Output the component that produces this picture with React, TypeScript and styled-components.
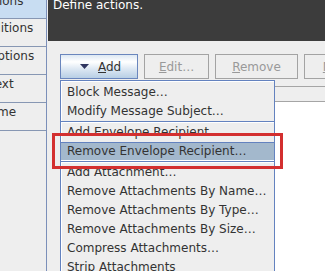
import React from "react";
import styled, { createGlobalStyle } from "styled-components";

const GlobalStyle = createGlobalStyle`
  html, body {
    margin: 0;
    padding: 0;
    background: #eeeeee;
  }
  body {
    width: 325px;
    height: 271px;
    overflow: hidden;
    font-family: "DejaVu Sans", "Liberation Sans", sans-serif;
    font-size: 12px;
    color: #333333;
  }
  #root {
    width: 325px;
    height: 271px;
  }
`;

const Screen = styled.div`
  position: relative;
  display: flex;
  width: 325px;
  height: 271px;
  overflow: hidden;
  background: #eeeeee;
`;

const TabColumn = styled.div`
  flex: 0 0 89px;
  margin-left: -43px;
  margin-top: -9px;
  display: flex;
  flex-direction: column;
`;

const Tab = styled.div<{ $selected?: boolean; $last?: boolean }>`
  box-sizing: border-box;
  height: ${(p) => (p.$selected ? 27 : p.$last ? 29 : 28)}px;
  padding-top: 2px;
  line-height: 14px;
  text-align: center;
  white-space: nowrap;
  color: #333333;
  background: ${(p) => (p.$selected ? "#c8ddf2" : "#eeeeee")};
  border-top: 1px solid ${(p) => (p.$selected ? "#c8ddf2" : "#8797b3")};
  border-bottom: ${(p) => (p.$last ? "1px solid #8797b3" : "none")};
`;

const Content = styled.div`
  flex: 1;
  min-width: 0;
  display: flex;
  flex-direction: column;
  border-left: 1px solid #7b8fb9;
  padding-left: 1px;
`;

const Header = styled.div`
  flex: 0 0 41px;
  background: #3c3c3c;
  color: #ffffff;
  padding-left: 5px;
  overflow: hidden;
`;

const Title = styled.div`
  margin-top: -2px;
  line-height: 14px;
  white-space: nowrap;
`;

const Body = styled.div`
  flex: 1;
  display: flex;
  flex-direction: column;
  padding: 13px 0 0 12px;
`;

const ButtonRow = styled.div`
  display: flex;
  gap: 6px;
  height: 25px;
`;

const Button = styled.div<{ $w: number; $disabled?: boolean; $start?: boolean }>`
  box-sizing: border-box;
  flex: 0 0 ${(p) => p.$w}px;
  height: 25px;
  display: flex;
  align-items: center;
  justify-content: ${(p) => (p.$start ? "flex-start" : "center")};
  padding-left: ${(p) => (p.$start ? "19px" : "0")};
  white-space: nowrap;
  line-height: 14px;
  color: ${(p) => (p.$disabled ? "#999999" : "#333333")};
  border: 1px solid ${(p) => (p.$disabled ? "#a3a3a3" : "#6a86bd")};
  background: ${(p) =>
    p.$disabled
      ? "#eeeeee"
      : "linear-gradient(#dde8f3 0%, #ffffff 30%, #dde8f3 60%, #b8cfe5 100%)"};
`;

const Mn = styled.span`
  text-decoration: underline;
  text-underline-offset: 1px;
`;

const Arrow = styled.svg`
  display: block;
  margin-right: 9px;
`;

const AddWrap = styled.div`
  position: relative;
  display: flex;
`;

const Menu = styled.div`
  position: absolute;
  top: 26px;
  left: 0;
  z-index: 2;
  box-sizing: border-box;
  width: 215px;
  padding: 2px 0 1px 0;
  border: 1px solid #6382bf;
  background: #eeeeee;
  box-shadow: inset 1px 1px 0 #ffffff;
`;

const Item = styled.div<{ $armed?: boolean }>`
  box-sizing: border-box;
  height: 19px;
  line-height: ${(p) => (p.$armed ? 17 : 19)}px;
  padding-left: ${(p) => (p.$armed ? 6 : 5)}px;
  white-space: nowrap;
  color: #333333;
  background: ${(p) => (p.$armed ? "#a3b8cc" : "transparent")};
  border-left: ${(p) => (p.$armed ? "none" : "1px solid #ffffff")};
  border-top: ${(p) => (p.$armed ? "1px solid #6382bf" : "none")};
  border-bottom: ${(p) => (p.$armed ? "1px solid #ffffff" : "none")};
`;

const Separator = styled.div`
  height: 1px;
  background: #6382bf;
  border-bottom: 1px solid #ffffff;
`;

const Table = styled.div`
  flex: 1;
  display: flex;
  flex-direction: column;
  margin-top: 7px;
  margin-right: -20px;
`;

const TableHead = styled.div`
  flex: 0 0 14px;
  background: #eeeeee;
  border-top: 1px solid #a5a5a5;
  border-bottom: 1px solid #a5a5a5;
`;

const TableBody = styled.div`
  flex: 1;
  background: #ffffff;
`;

const Callout = styled.div`
  position: absolute;
  left: 52px;
  top: 133px;
  width: 231px;
  height: 36px;
  box-sizing: border-box;
  border: 3px solid #d32f2f;
  z-index: 3;
  pointer-events: none;
`;

type MenuEntry = { label?: string; sep?: boolean; armed?: boolean };

const menuEntries: MenuEntry[] = [
  { label: "Block Message…" },
  { label: "Modify Message Subject…" },
  { sep: true },
  { label: "Add Envelope Recipient…" },
  { label: "Remove Envelope Recipient…", armed: true },
  { sep: true },
  { label: "Add Attachment…" },
  { label: "Remove Attachments By Name…" },
  { label: "Remove Attachments By Type…" },
  { label: "Remove Attachments By Size…" },
  { label: "Compress Attachments…" },
  { label: "Strip Attachments" },
];

const tabs = ["Actions", "Conditions", "Exceptions", "Text", "Time"];

export default function App() {
  return (
    <>
      <GlobalStyle />
      <Screen>
        <TabColumn>
          {tabs.map((t, i) => (
            <Tab key={t} $selected={i === 0} $last={i === tabs.length - 1}>
              {t}
            </Tab>
          ))}
        </TabColumn>
        <Content>
          <Header>
            <Title>Define actions.</Title>
          </Header>
          <Body>
            <ButtonRow>
              <AddWrap>
                <Button $w={78} $start>
                  <Arrow width="9" height="5" viewBox="0 0 9 5">
                    <polygon points="0,0 9,0 4.5,5" fill="#2f3560" />
                  </Arrow>
                  <span>
                    <Mn>A</Mn>dd
                  </span>
                </Button>
                <Menu>
                  {menuEntries.map((m, i) =>
                    m.sep ? (
                      <Separator key={i} />
                    ) : (
                      <Item key={i} $armed={m.armed}>
                        {m.label}
                      </Item>
                    )
                  )}
                </Menu>
              </AddWrap>
              <Button $w={65} $disabled>
                <span>
                  <Mn>E</Mn>dit…
                </span>
              </Button>
              <Button $w={83} $disabled>
                <span>
                  <Mn>R</Mn>emove
                </span>
              </Button>
              <Button $w={90} $disabled>
                <span>
                  <Mn>M</Mn>ove Up
                </span>
              </Button>
            </ButtonRow>
            <Table>
              <TableHead />
              <TableBody />
            </Table>
          </Body>
        </Content>
        <Callout />
      </Screen>
    </>
  );
}
